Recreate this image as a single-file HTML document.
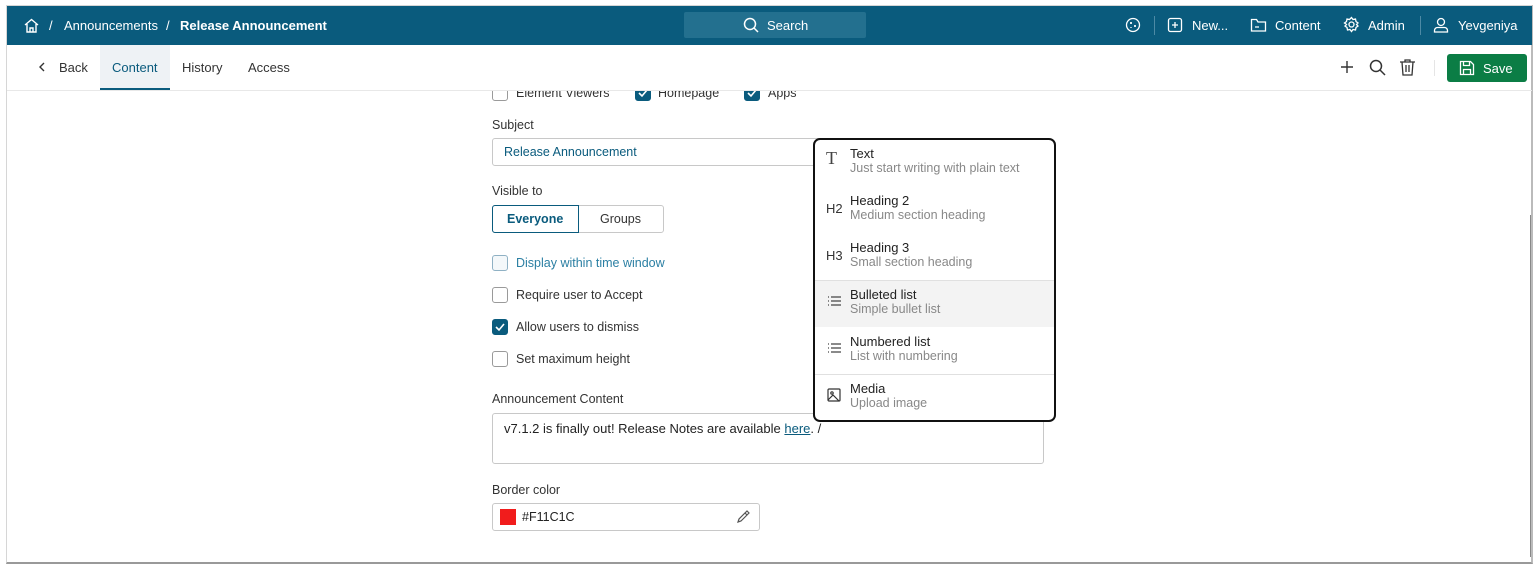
<!DOCTYPE html>
<html><head><meta charset="utf-8"><style>
*{box-sizing:border-box;margin:0;padding:0}
body{width:1539px;height:566px;background:#fff;font-family:"Liberation Sans",Arial,sans-serif;position:relative;overflow:hidden;color:#222}
.a{position:absolute}
.frame{left:6px;top:5px;width:1527px;height:559px;border:1px solid #d6d6d6;border-bottom:2px solid #999;border-right:2px solid #bbb}
.hdr{left:7px;top:6px;width:1525px;height:39px;background:#0a5b7d;color:#fff;font-size:13px}
.hdr span{position:absolute;top:12px}
.cb{width:16px;height:16px;border:1px solid #9a9a9a;border-radius:3px;background:#fff}
.cb.on{background:#0a5b7d;border-color:#0a5b7d}
.lbl{font-size:12.5px;color:#333}
.mi{position:absolute;left:0;width:240px;height:47px}
.mi .t{position:absolute;left:35px;top:6px;font-size:13px;color:#222}
.mi .s{position:absolute;left:35px;top:21px;font-size:12.5px;color:#888}
.mi .ic{position:absolute;left:11px;top:14px;font-size:13px;color:#333}
</style></head><body>
<div class="a frame"></div>
<div class="a hdr">
<svg class="a" style="left:16px;top:11px" width="17" height="17" viewBox="0 0 17 17" fill="none" stroke="#fff" stroke-width="1.4"><path d="M2 8L8.5 2.5 15 8M4 7v8h9V7M7 15v-4h3v4"/></svg>
<span style="left:42px">/</span><span style="left:57px">Announcements</span><span style="left:159px">/</span><span style="left:173px;font-weight:bold">Release Announcement</span>
<div class="a" style="left:677px;top:6px;width:182px;height:26px;background:#23708f;border-radius:2px"></div>
<svg class="a" style="left:736px;top:11px" width="16" height="16" viewBox="0 0 16 16" fill="none" stroke="#fff" stroke-width="1.5"><circle cx="7" cy="7" r="5.5"/><path d="M11 11l4 4"/></svg>
<span style="left:760px">Search</span>
<svg class="a" style="left:1118px;top:11px" width="16" height="16" viewBox="0 0 16 16" fill="none" stroke="#fff" stroke-width="1.3"><circle cx="8" cy="8" r="6.5"/><path d="M6 5v2M5 6h2M10 8v2M9 9h2M6 10v1"/></svg>
<div class="a" style="left:1147px;top:10px;width:1px;height:19px;background:#4d8aa5"></div>
<svg class="a" style="left:1160px;top:11px" width="16" height="16" viewBox="0 0 16 16" fill="none" stroke="#fff" stroke-width="1.3"><rect x="1.5" y="1.5" width="13" height="13" rx="2"/><path d="M8 5v6M5 8h6"/></svg>
<span style="left:1185px">New...</span>
<svg class="a" style="left:1243px;top:11px" width="17" height="16" viewBox="0 0 17 16" fill="none" stroke="#fff" stroke-width="1.3"><path d="M1.5 3v11h14V5H8L6.5 2.5h-5zM5 10h4"/></svg>
<span style="left:1268px">Content</span>
<svg class="a" style="left:1336px;top:10px" width="17" height="17" viewBox="0 0 17 17" fill="none" stroke="#fff" stroke-width="1.3"><circle cx="8.5" cy="8.5" r="2.5"/><path d="M8.5 1.5l1.5 2 2.5-.5.5 2.5 2 1.5-1.5 1.5 1.5 1.5-2 1.5-.5 2.5-2.5-.5-1.5 2-1.5-2-2.5.5-.5-2.5-2-1.5 1.5-1.5L1.5 7l2-1.5.5-2.5 2.5.5z"/></svg>
<span style="left:1361px">Admin</span>
<div class="a" style="left:1413px;top:10px;width:1px;height:19px;background:#4d8aa5"></div>
<svg class="a" style="left:1426px;top:11px" width="16" height="16" viewBox="0 0 16 16" fill="none" stroke="#fff" stroke-width="1.3"><circle cx="8" cy="5" r="3.5"/><path d="M1.5 15v-1.5a3 3 0 013-3h7a3 3 0 013 3V15z"/></svg>
<span style="left:1451px">Yevgeniya</span>
</div>
<!-- toolbar -->
<div class="a" style="left:100px;top:45px;width:70px;height:45px;background:#eef2f5;border-bottom:2px solid #0a5b7d"></div>
<div class="a" style="left:7px;top:90px;width:1525px;height:1px;background:#e8e8e8"></div>
<svg class="a" style="left:38px;top:62px" width="8" height="10" viewBox="0 0 8 10" fill="none" stroke="#333" stroke-width="1.4"><path d="M6 1L2 5l4 4"/></svg>
<span class="a" style="left:59px;top:60px;font-size:13px;color:#333">Back</span>
<span class="a" style="left:112px;top:60px;font-size:13px;color:#0a5b7d">Content</span>
<span class="a" style="left:182px;top:60px;font-size:13px;color:#333">History</span>
<span class="a" style="left:248px;top:60px;font-size:13px;color:#333">Access</span>
<svg class="a" style="left:1340px;top:60px" width="14" height="14" viewBox="0 0 14 14" stroke="#333" stroke-width="1.4"><path d="M7 1v12M1 7h12"/></svg>
<svg class="a" style="left:1369px;top:59px" width="17" height="17" viewBox="0 0 17 17" fill="none" stroke="#333" stroke-width="1.5"><circle cx="7" cy="7" r="5.5"/><path d="M11 11l5 5"/></svg>
<svg class="a" style="left:1399px;top:58px" width="17" height="18" viewBox="0 0 17 18" fill="none" stroke="#333" stroke-width="1.3"><path d="M1 4h15M6 4V2h5v2M3 4l1 13h9l1-13M7 7v7M10 7v7"/></svg>
<div class="a" style="left:1434px;top:60px;width:1px;height:16px;background:#e5e5e5"></div>
<div class="a" style="left:1447px;top:54px;width:80px;height:28px;background:#0b7d45;border-radius:3px"></div>
<svg class="a" style="left:1459px;top:60px" width="16" height="16" viewBox="0 0 16 16" fill="none" stroke="#fff" stroke-width="1.3"><path d="M1.5 1.5h10l3 3v10h-13zM4.5 1.5v4h6v-4M4.5 14.5v-5h7v5"/></svg>
<span class="a" style="left:1483px;top:61px;font-size:13px;color:#fff">Save</span>
<!-- scrollbar -->
<div class="a" style="left:1530px;top:215px;width:1px;height:342px;background:#888"></div>
<!-- form top row (clipped) -->
<div class="a" style="left:0;top:91px;width:1522px;height:11px;overflow:hidden">
 <div class="a cb" style="left:492px;top:-6px"></div><span class="a lbl" style="left:516px;top:-5px">Element Viewers</span>
 <div class="a cb on" style="left:635px;top:-6px"></div>
 <svg class="a" style="left:638px;top:-3px" width="10" height="10" viewBox="0 0 10 10" fill="none" stroke="#fff" stroke-width="1.6"><path d="M1 5l3 3 5-6"/></svg>
 <span class="a lbl" style="left:658px;top:-5px">Homepage</span>
 <div class="a cb on" style="left:744px;top:-6px"></div>
 <svg class="a" style="left:747px;top:-3px" width="10" height="10" viewBox="0 0 10 10" fill="none" stroke="#fff" stroke-width="1.6"><path d="M1 5l3 3 5-6"/></svg>
 <span class="a lbl" style="left:768px;top:-5px">Apps</span>
</div>
<span class="a lbl" style="left:492px;top:118px">Subject</span>
<div class="a" style="left:492px;top:138px;width:340px;height:28px;border:1px solid #c8c8c8;border-radius:3px"></div>
<span class="a" style="left:504px;top:145px;font-size:12.5px;color:#0a5b7d">Release Announcement</span>
<span class="a lbl" style="left:492px;top:184px">Visible to</span>
<div class="a" style="left:492px;top:205px;width:172px;height:28px;border:1px solid #c8c8c8;border-radius:3px"></div>
<div class="a" style="left:492px;top:205px;width:87px;height:28px;border:1px solid #0a5b7d;border-radius:3px 0 0 3px"></div>
<span class="a" style="left:507px;top:212px;font-size:12.5px;color:#0a5b7d;font-weight:bold">Everyone</span>
<span class="a lbl" style="left:600px;top:212px">Groups</span>
<div class="a cb" style="left:492px;top:255px;border-color:#8fb1c4;background:#f4f8fa"></div><span class="a lbl" style="left:516px;top:256px;color:#2b7fa3">Display within time window</span>
<div class="a cb" style="left:492px;top:287px"></div><span class="a lbl" style="left:516px;top:288px">Require user to Accept</span>
<div class="a cb on" style="left:492px;top:319px"></div>
<svg class="a" style="left:495px;top:322px" width="10" height="10" viewBox="0 0 10 10" fill="none" stroke="#fff" stroke-width="1.6"><path d="M1 5l3 3 5-6"/></svg>
<span class="a lbl" style="left:516px;top:320px">Allow users to dismiss</span>
<div class="a cb" style="left:492px;top:351px"></div><span class="a lbl" style="left:516px;top:352px">Set maximum height</span>
<span class="a lbl" style="left:492px;top:392px">Announcement Content</span>
<div class="a" style="left:492px;top:413px;width:552px;height:51px;border:1px solid #c8c8c8;border-radius:3px"></div>
<span class="a" style="left:504px;top:421px;font-size:13px;color:#222">v7.1.2 is finally out! Release Notes are available <u style="color:#0a5b7d">here</u>. /</span>
<span class="a lbl" style="left:492px;top:483px">Border color</span>
<div class="a" style="left:492px;top:503px;width:268px;height:28px;border:1px solid #c8c8c8;border-radius:3px"></div>
<div class="a" style="left:500px;top:509px;width:16px;height:16px;background:#f11c1c"></div>
<span class="a" style="left:522px;top:510px;font-size:12.5px">#F11C1C</span>
<svg class="a" style="left:736px;top:509px" width="15" height="15" viewBox="0 0 15 15" fill="none" stroke="#555" stroke-width="1.2"><path d="M2 13l1-3 6-6 2 2-6 6zM9 4l2-2 2 2-2 2"/></svg>
<!-- menu -->
<div class="a" style="left:813px;top:138px;width:243px;height:284px;border:2px solid #111;border-radius:7px;background:#fff;overflow:hidden">
 <div class="mi" style="top:0"><span class="ic" style="font-family:'Liberation Serif';font-size:18px;top:8px;color:#444">T</span><span class="t">Text</span><span class="s">Just start writing with plain text</span></div>
 <div class="mi" style="top:47px"><span class="ic">H2</span><span class="t">Heading 2</span><span class="s">Medium section heading</span></div>
 <div class="mi" style="top:94px"><span class="ic">H3</span><span class="t">Heading 3</span><span class="s">Small section heading</span></div>
 <div class="mi" style="top:140px;background:#f3f3f3;border-top:1px solid #e0e0e0"><svg class="a" style="left:12px;top:14px" width="14" height="12" viewBox="0 0 14 12" stroke="#444" stroke-width="1.2"><path d="M1 2h1M1 6h1M1 10h1M4 2h10M4 6h10M4 10h10"/></svg><span class="t">Bulleted list</span><span class="s">Simple bullet list</span></div>
 <div class="mi" style="top:188px"><svg class="a" style="left:12px;top:14px" width="14" height="12" viewBox="0 0 14 12" stroke="#444" stroke-width="1.2"><path d="M1 2h1M1 6h1M1 10h1M4 2h10M4 6h10M4 10h10"/></svg><span class="t">Numbered list</span><span class="s">List with numbering</span></div>
 <div class="mi" style="top:234px;border-top:1px solid #e0e0e0"><svg class="a" style="left:12px;top:13px" width="14" height="14" viewBox="0 0 14 14" fill="none" stroke="#333" stroke-width="1.2"><rect x="1" y="1" width="12" height="12" rx="1"/><circle cx="5" cy="5" r="1.2"/><path d="M1 12l5-5 6 6"/></svg><span class="t">Media</span><span class="s">Upload image</span></div>
</div>
</body></html>
